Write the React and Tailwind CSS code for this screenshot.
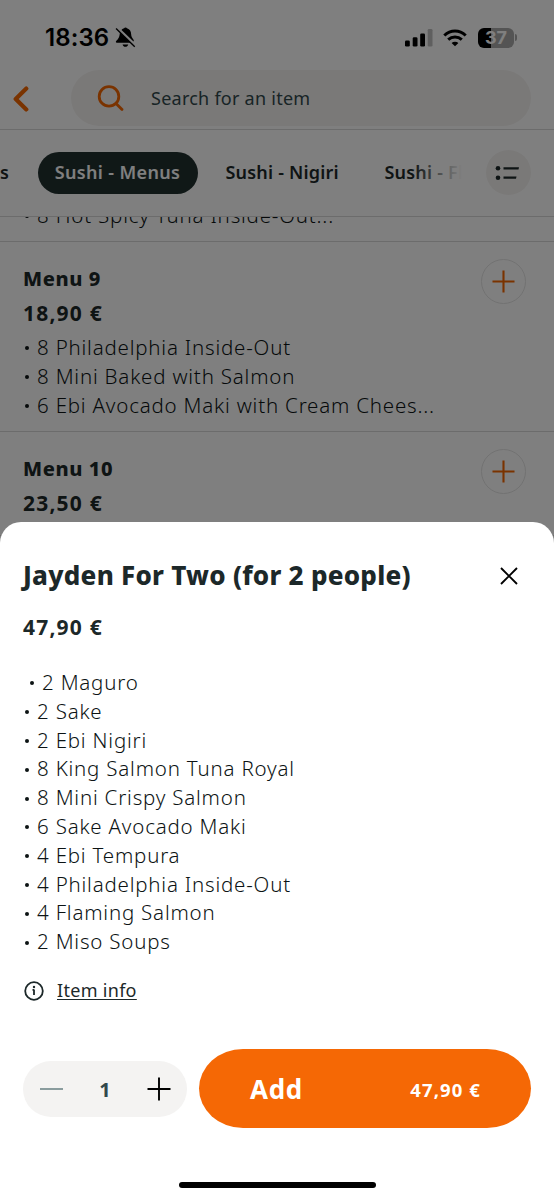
const tabs = [
  { name: 'Sushi - Nigiri', width: 'w-[159px]' },
  { name: 'Sushi - Flaming', width: 'w-[180px]' },
];

const menus = [
  {
    name: 'Menu 9',
    price: '18,90 €',
    items: [
      { text: '8 Philadelphia Inside-Out' },
      { text: '8 Mini Baked with Salmon' },
      { text: '6 Ebi Avocado Maki with Cream Chees...' },
    ],
  },
  { name: 'Menu 10', price: '23,50 €', items: [] },
];

const contents = [
  { text: '2 Maguro', indent: true },
  { text: '2 Sake' },
  { text: '2 Ebi Nigiri' },
  { text: '8 King Salmon Tuna Royal' },
  { text: '8 Mini Crispy Salmon' },
  { text: '6 Sake Avocado Maki' },
  { text: '4 Ebi Tempura' },
  { text: '4 Philadelphia Inside-Out' },
  { text: '4 Flaming Salmon' },
  { text: '2 Miso Soups' },
];

const PlusIcon = ({ className, strokeWidth = 2.2 }) => (
  <svg viewBox="0 0 24 24" className={className} stroke="currentColor" strokeWidth={strokeWidth}>
    <path d="M12 .5v23M.5 12h23" />
  </svg>
);

const ItemList = ({ items }) => (
  <ul className="text-[20.5px] leading-[28.8px] font-light tracking-[0.8px] whitespace-nowrap text-[#0c1314]">
    {items.map((item) => (
      <li key={item.text} className={`flex items-center ${item.indent ? 'pl-[5px]' : ''}`}>
        <span className="ml-[2px] mr-[8px] mt-[2px] size-[4px] rounded-full bg-current" />
        {item.text}
      </li>
    ))}
  </ul>
);

const StatusBar = () => (
  <div className="flex h-[70px] shrink-0 items-center pt-[5px] pl-[45px] pr-[37px] text-black">
    <span className="w-[70px] pt-px font-[Inter,sans-serif] text-[24px] font-semibold leading-none tracking-[0.1px]">18:36</span>
    <svg viewBox="0 0 20 20" className="size-[21px]" fill="currentColor">
      <path d="M6.200 2.800C7 1.700 8 1.400 8.700 1.200C9 .2 11 .2 11.400 1.200C14.200 2 15.300 4.300 15.400 7C15.500 9 16 10.200 17.800 12.400C18 13 18 13.500 17.600 13.800Z" />
      <path d="M4.700 5.300L14.800 15.100H1.800C.6 15.100.5 14.100 1.300 13.200C3.500 11 4.300 9.500 4.700 5.300Z" />
      <path d="M7.200 16.600h5.400c-.7 2.900-4.700 2.900-5.400 0Z" />
      <path d="M1 1.500L18.800 18.800" stroke="currentColor" strokeWidth="1.300" />
    </svg>
    <div className="ml-auto flex items-center">
      <svg viewBox="0 0 28 18" className="mr-[10px] h-[18px] w-[28px]" fill="currentColor">
        <rect x="0" y="11.500" width="4.800" height="6" rx="1.300" />
        <rect x="7.700" y="8.200" width="4.800" height="9.300" rx="1.300" />
        <rect x="15.200" y="4.400" width="4.800" height="13.100" rx="1.300" />
        <rect x="22.700" y="0" width="4.800" height="17.500" rx="1.300" opacity=".25" />
      </svg>
      <svg viewBox="0 0 24 18" className="mr-[11px] h-[18px] w-[24px]" fill="none" stroke="currentColor" strokeWidth="3">
        <path d="M1.300 6.500C7.500.5 16.500.5 22.700 6.500" />
        <path d="M5.200 10.700C9.200 7 14.800 7 18.800 10.700" />
        <path d="M12 17.300L8.600 13.900C10.500 12.200 13.500 12.200 15.400 13.900Z" fill="currentColor" stroke="none" />
      </svg>
      <div className="flex h-[20px] w-[36px] items-center justify-center rounded-[6px] bg-[linear-gradient(90deg,#000_13px,#a9a9a9_13px)] font-[Inter,sans-serif] text-[18px] font-bold leading-none text-white">
        37
      </div>
      <div className="ml-px h-[7px] w-[2px] rounded-r-full bg-[#a9a9a9]" />
    </div>
  </div>
);

const MenuPage = () => (
  <div className="flex h-full flex-col bg-white">
    <StatusBar />

    {/* Search */}
    <div className="flex h-[60px] shrink-0 items-start border-b border-[#d8d8d8] pr-[23px]">
      <svg viewBox="0 0 17 28" className="mt-[14.500px] ml-[12px] h-[28px] w-[17px] text-[#f56600]" fill="none" stroke="currentColor" strokeWidth="4.200" strokeLinecap="round" strokeLinejoin="round">
        <path d="M14.300 3.600L3.700 14L14.300 24.400" />
      </svg>
      <div className="ml-[42px] flex h-[56px] flex-1 items-center rounded-full bg-[#f5f3f1] pl-[26px]">
        <svg viewBox="0 0 28 28" className="size-[28px] text-[#f56600]" fill="none" stroke="currentColor" strokeWidth="2.800" strokeLinecap="round">
          <circle cx="12" cy="12.400" r="9.800" />
          <path d="M19 19.400L25 25.400" />
        </svg>
        <span className="ml-[26px] text-[18px] tracking-[0.250px] text-[#31484c]">Search for an item</span>
      </div>
    </div>

    {/* Category tabs */}
    <div className="flex h-[87px] shrink-0 items-center border-b border-[#d8d8d8] pb-px pr-[23px] text-[18px] font-semibold tracking-[0.200px]">
      <div className="relative flex w-[462px] items-center overflow-hidden whitespace-nowrap">
        <span className="w-[37.500px] shrink-0">s</span>
        <span className="mr-[28px] flex h-[42px] w-[160px] shrink-0 items-center justify-center rounded-full bg-[#20302f] tracking-[0.350px] text-white">
          Sushi - Menus
        </span>
        {tabs.map((tab) => (
          <span key={tab.name} className={`shrink-0 ${tab.width}`}>{tab.name}</span>
        ))}
        <div className="absolute inset-y-0 right-0 w-[50px] bg-linear-to-r from-white/0 to-white" />
      </div>
      <div className="ml-auto flex size-[45px] items-center justify-center rounded-full bg-[#f5f3f1]">
        <svg viewBox="0 0 24 16" className="mr-[3px] h-[16px] w-[24px]" fill="currentColor">
          <circle cx="3" cy="3.300" r="2.300" />
          <circle cx="3" cy="12.700" r="2.300" />
          <path d="M8.500 2.200H24L23.500 4.500H8.500ZM8.500 11.500H21.500L21 13.800H8.500Z" />
        </svg>
      </div>
    </div>

    <div className="flex-1 overflow-hidden">
      <div className="-mt-[16px] h-[41px] border-b border-[#d8d8d8] px-[23px]">
        <ItemList items={[{ text: '8 Hot Spicy Tuna Inside-Out...' }]} />
      </div>
      {menus.map((menu) => (
        <div key={menu.name} className="flex items-start justify-between border-b border-[#d8d8d8] pt-[22px] pb-[12px] pl-[23px] pr-[28.500px]">
          <div className="text-[20px] leading-[29px]">
            <h2 className="font-extrabold tracking-[0.600px]">{menu.name}</h2>
            <p className="mt-[6px] mb-[5px] text-[21px] font-bold tracking-[1.200px]">{menu.price}</p>
            <ItemList items={menu.items} />
          </div>
          <button className="-mt-[5px] flex size-[45px] items-center justify-center rounded-full border border-[#e4e4e4] text-[#f56600]">
            <PlusIcon className="size-[23px]" />
          </button>
        </div>
      ))}
    </div>
  </div>
);

const ItemSheet = () => (
  <div className="absolute inset-x-0 bottom-0 flex h-[678px] flex-col rounded-t-[21px] bg-white px-[23px] pt-[34px]">
    <div className="flex h-[36px] items-center justify-between pr-[13.500px]">
      <h1 className="pt-px text-[26px] font-extrabold leading-[36px] tracking-[0.250px]">Jayden For Two (for 2 people)</h1>
      <svg viewBox="0 0 18 18" className="mt-[4px] size-[18px] text-black" stroke="currentColor" strokeWidth="1.900">
        <path d="M1 1L17 17M17 1L1 17" />
      </svg>
    </div>
    <p className="mt-[21px] mb-[26px] text-[21px] font-bold leading-[29px] tracking-[1.200px]">47,90 €</p>
    <ItemList items={contents} />

    <div className="mt-[23px] flex h-[24px] items-center">
      <svg viewBox="0 0 22 22" className="size-[22px]" fill="none" stroke="currentColor" strokeWidth="1.800">
        <circle cx="11" cy="11" r="8.800" />
        <path d="M11 9.500V15M9.500 9.900H11" />
        <circle cx="11" cy="7" r="1.200" fill="currentColor" stroke="none" />
      </svg>
      <span className="ml-[12px] text-[18px] tracking-[0.300px] underline decoration-1 underline-offset-2">Item info</span>
    </div>

    <div className="mt-[46px] flex items-center gap-[12px]">
      <div className="mt-px flex h-[56px] w-[164px] items-center justify-between rounded-full bg-[#f4f3f2] pl-[17px] pr-[16px]">
        <span className="h-[2px] w-[23px] bg-[#8a9c9e]" />
        <span className="pt-[2px] text-[20px] font-bold text-[#31484c]">1</span>
        <PlusIcon className="size-[24px] text-black" strokeWidth={1.9} />
      </div>
      <button className="flex h-[79px] flex-1 items-center justify-between rounded-[44px/39.500px] bg-[#f56805] pt-[3px] pl-[51px] pr-[50px] text-white">
        <span className="text-[26px] font-bold tracking-[0.700px]">Add</span>
        <span className="text-[18.500px] font-bold tracking-[1.100px]">47,90 €</span>
      </button>
    </div>
    <div className="mt-[54px] h-[6px] w-[197px] self-center rounded-full bg-black" />
  </div>
);

export default function App() {
  return (
    <div className="relative h-[1200px] w-[554px] overflow-hidden font-['Noto_Sans',sans-serif] text-[#1c2829]">
      <MenuPage />
      <div className="absolute inset-0 bg-black/50" />
      <ItemSheet />
    </div>
  );
}
